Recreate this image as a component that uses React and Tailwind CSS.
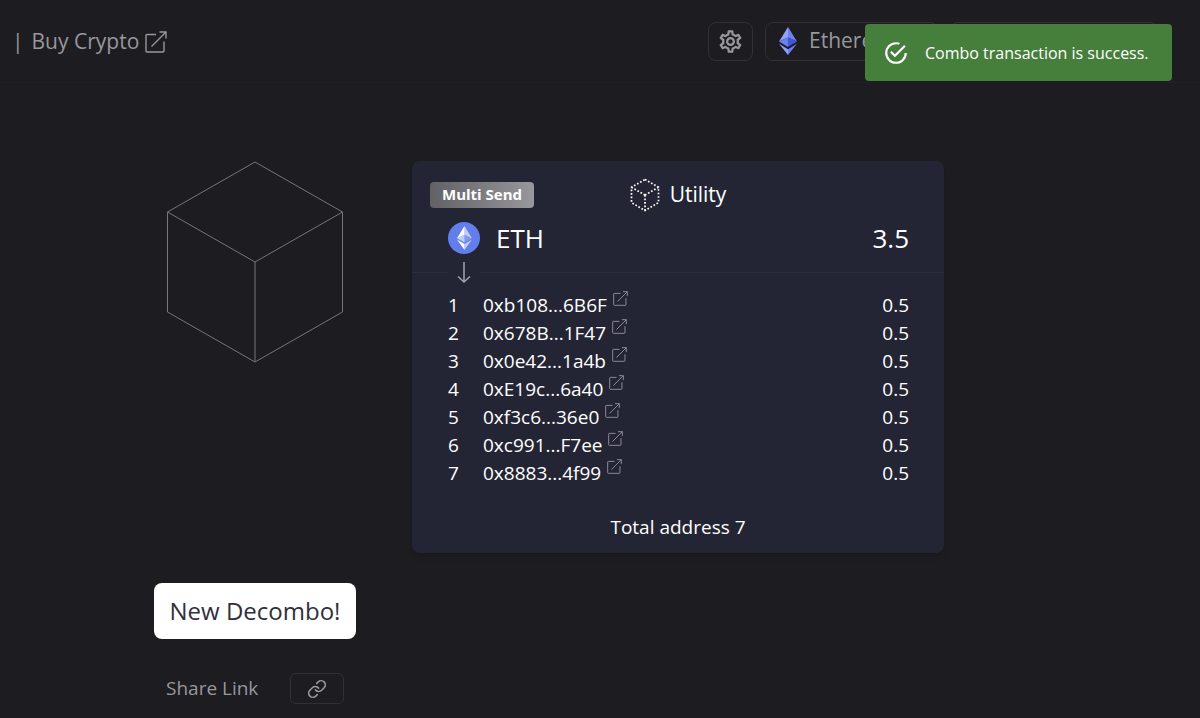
import React from 'react';
import { FiLink } from 'react-icons/fi';
import { MdOutlineSettings } from 'react-icons/md';

const recipients = [
  { address: '0xb108...6B6F', amount: '0.5' },
  { address: '0x678B...1F47', amount: '0.5' },
  { address: '0x0e42...1a4b', amount: '0.5' },
  { address: '0xE19c...6a40', amount: '0.5' },
  { address: '0xf3c6...36e0', amount: '0.5' },
  { address: '0xc991...F7ee', amount: '0.5' },
  { address: '0x8883...4f99', amount: '0.5' },
];

function ExternalIcon({ className }) {
  return (
    <svg viewBox="0 0 22 22" fill="none" stroke="currentColor" strokeWidth="1.4" className={className} aria-hidden="true">
      <path d="M11 3.5H2a1 1 0 0 0-1 1V20a1 1 0 0 0 1 1h16a1 1 0 0 0 1-1v-9.5" />
      <path d="M6.5 15.5 21 1M14.5 1H21v6.5" />
    </svg>
  );
}

function EthDiamond({ className }) {
  return (
    <svg viewBox="0 0 18 28" className={className} aria-hidden="true">
      <path d="M9 0 0 14.5 9 10.6Z" fill="#8ea2f8" />
      <path d="M9 0 18 14.5 9 10.6Z" fill="#6f83ee" />
      <path d="M0 14.5 9 10.6V20Z" fill="#6a7ff0" />
      <path d="M18 14.5 9 10.6V20Z" fill="#4356d8" />
      <path d="M0 16.8 9 22.2V28Z" fill="#8ea2f8" />
      <path d="M18 16.8 9 22.2V28Z" fill="#6a7ff0" />
    </svg>
  );
}

function EthCoin({ className }) {
  return (
    <svg viewBox="0 0 32 32" className={className} aria-hidden="true">
      <circle cx="16" cy="16" r="16" fill="#627eea" />
      <g fill="#fff">
        <path fillOpacity=".6" d="M16.5 4v8.87l7.5 3.35z" />
        <path d="M16.5 4 9 16.22l7.5-3.35z" />
        <path fillOpacity=".6" d="M16.5 21.97V28L24 17.62z" />
        <path d="M16.5 28v-6.03L9 17.62z" />
        <path fillOpacity=".2" d="m16.5 20.57 7.5-4.35-7.5-3.35z" />
        <path fillOpacity=".6" d="m9 16.22 7.5 4.35v-7.7z" />
      </g>
    </svg>
  );
}

function Cube({ className }) {
  return (
    <svg viewBox="0 0 176 202" fill="none" stroke="currentColor" className={className} aria-hidden="true">
      <path d="M88 1 175.5 51V151L88 201 .5 151V51ZM.5 51 88 101 175.5 51M88 101V201" />
    </svg>
  );
}

function DottedCube({ className }) {
  return (
    <svg viewBox="0 0 30 34" fill="none" stroke="currentColor" strokeWidth="1.7" strokeDasharray="1.7 1.8" className={className} aria-hidden="true">
      <path d="M15 1.5 28.5 9.2V24.6L15 32.5 1.5 24.6V9.2Z" />
      <path d="M15 17 1.5 9.2M15 17 28.5 9.2M15 17V32.5" />
    </svg>
  );
}

function SuccessToast() {
  return (
    <div role="status" className="absolute top-6 right-7 flex h-[57px] w-[307px] items-center gap-4 rounded bg-[#467e3b] pl-[18px] text-[16px] whitespace-nowrap text-white">
      <svg viewBox="0 0 24 24" fill="currentColor" className="size-[26px] shrink-0" aria-hidden="true">
        <path d="M20,12A8,8 0 0,1 12,20A8,8 0 0,1 4,12A8,8 0 0,1 12,4C12.76,4 13.5,4.11 14.2,4.31L15.77,2.74C14.61,2.26 13.34,2 12,2A10,10 0 0,0 2,12A10,10 0 0,0 12,22A10,10 0 0,0 22,12M7.91,10.08L6.5,11.5L11,16L21,6L19.59,4.58L11,13.17L7.91,10.08Z" />
      </svg>
      Combo transaction is success.
    </div>
  );
}

function Header() {
  return (
    <header className="flex h-[83px] items-center justify-between border-b border-[#201f25] pr-[42px] pl-3 text-[21px] text-[#98979c]">
      <div className="flex items-center gap-2 pt-0.5">
        <span>|</span>
        <a href="#buy" className="flex items-center gap-1.5">
          Buy Crypto
          <ExternalIcon className="size-[22px]" />
        </a>
      </div>
      <div className="flex gap-3">
        <button aria-label="Settings" className="flex h-[39px] w-[45px] items-center justify-center rounded-lg border border-[#313036]">
          <MdOutlineSettings size={27} />
        </button>
        <button className="flex h-[39px] w-[173px] items-center gap-3 rounded-lg border border-[#313036] pl-[13px]">
          <EthDiamond className="h-7 w-[18px]" />
          Ethereum
        </button>
        <button aria-label="Account" className="h-[39px] w-[208px] rounded-lg border border-[#313036]" />
      </div>
    </header>
  );
}

function ComboCard() {
  return (
    <section className="max-w-[532px] flex-1 rounded-lg bg-[#242534] pt-4 pb-3 text-[19px] text-white shadow-md">
      <div className="grid h-9 grid-cols-3 items-center px-[18px]">
        <span className="justify-self-start rounded bg-linear-to-r from-[#626266] to-[#98989c] px-3 pb-0.5 text-[15px] leading-6 font-bold">
          Multi Send
        </span>
        <h2 className="flex items-center justify-center gap-2.5 text-[21px]">
          <DottedCube className="h-[34px] w-[30px]" />
          Utility
        </h2>
      </div>

      <div className="mt-[5px] flex h-10 items-center pr-[35px] pl-9 text-[26px]">
        <EthCoin className="size-8" />
        <span className="ml-4">ETH</span>
        <span className="ml-auto">3.5</span>
      </div>

      {/* Divider, broken by the arrow */}
      <div className="mt-0.5 flex h-6 items-center">
        <div className="h-px w-9 bg-[#2c2d3b]" />
        <svg viewBox="0 0 32 24" fill="none" stroke="#a3a3ad" strokeWidth="1.5" className="h-6 w-8" aria-hidden="true">
          <path d="M16 2V22M10 16.5 16 22 22 16.5" />
        </svg>
        <div className="h-px flex-1 bg-[#2c2d3b]" />
      </div>

      <div className="mt-[7px] pr-[35px] pl-9">
        <table className="w-full">
          <tbody>
            {recipients.map((item, idx) => (
              <tr key={item.address} className="h-7 leading-7">
                <td className="w-[35px] p-0">{idx + 1}</td>
                <td className="p-0">
                  <a href={`#${item.address}`} className="flex gap-1.5">
                    {item.address}
                    <ExternalIcon className="size-[15px] text-[#8f8f9b]" />
                  </a>
                </td>
                <td className="p-0 text-right">{item.amount}</td>
              </tr>
            ))}
          </tbody>
        </table>
      </div>

      <p className="mt-[26px] text-center leading-7">Total address 7</p>
    </section>
  );
}

export default function App() {
  return (
    <div className="relative min-h-screen overflow-hidden bg-[#1d1c21] font-['Open_Sans',sans-serif]">
      <Header />
      <SuccessToast />
      <main className="flex items-start gap-14 px-[154px] pt-[78px]">
        <div className="flex w-[202px] shrink-0 flex-col items-center">
          <Cube className="h-[202px] w-44 text-[#77767a]" />
          <button className="mt-[220px] h-14 w-full rounded-lg bg-white text-[24px] text-[#30303d]">
            New Decombo!
          </button>
          <div className="mt-[34px] flex w-full items-center justify-between px-3 text-[19px] text-[#98979c]">
            <span>Share Link</span>
            <button aria-label="Copy share link" className="flex h-[31px] w-[54px] items-center justify-center rounded-md border border-[#313036]">
              <FiLink size={20} />
            </button>
          </div>
        </div>
        <ComboCard />
      </main>
    </div>
  );
}
